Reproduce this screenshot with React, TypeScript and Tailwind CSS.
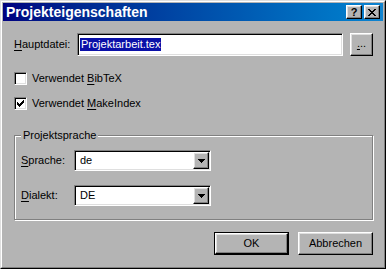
import React from "react";

// ─── Bausteine im Win9x-Stil ─────────────────────────────────────────────────

const raised =
  "border border-t-white border-l-white border-b-black border-r-black shadow-[inset_-1px_-1px_0_#808080,inset_1px_1px_0_#dfdfdf]";
const sunken =
  "border border-t-[#808080] border-l-[#808080] border-b-white border-r-white shadow-[inset_1px_1px_0_#000,inset_-1px_-1px_0_#dfdfdf]";

function U({ children }: { children: React.ReactNode }) {
  return <span className="underline underline-offset-[2px]">{children}</span>;
}

function CheckMark() {
  // 7x7 Pixel-Haken
  const px: [number, number][] = [
    [6, 0], [5, 1], [6, 1], [0, 2], [4, 2], [5, 2], [6, 2],
    [0, 3], [1, 3], [3, 3], [4, 3], [5, 3],
    [0, 4], [1, 4], [2, 4], [3, 4], [4, 4],
    [1, 5], [2, 5], [3, 5], [2, 6],
  ];
  return (
    <svg width="7" height="7" viewBox="0 0 7 7" shapeRendering="crispEdges">
      {px.map(([x, y]) => (
        <rect key={`${x}-${y}`} x={x} y={y} width="1" height="1" fill="#000" />
      ))}
    </svg>
  );
}

function Checkbox({ checked, children }: { checked?: boolean; children: React.ReactNode }) {
  return (
    <div className="flex items-center gap-[5px] h-[13px]">
      <div className={`w-[13px] h-[13px] bg-white flex items-center justify-center ${sunken}`}>
        {checked && <CheckMark />}
      </div>
      <span>{children}</span>
    </div>
  );
}

function Arrow() {
  return (
    <svg width="7" height="4" viewBox="0 0 7 4" shapeRendering="crispEdges">
      <path d="M0 0h7v1H0zM1 1h5v1H1zM2 2h3v1H2zM3 3h1v1H3z" fill="#000" />
    </svg>
  );
}

function Combo({ value }: { value: string }) {
  return (
    <div className={`w-[137px] h-[21px] bg-white flex items-center p-[2px] ${sunken}`}>
      <span className="flex-1 pl-[3px] leading-none">{value}</span>
      <div className={`w-[16px] h-[17px] -mr-px bg-[#b4b4b4] flex items-center justify-center ${raised}`}>
        <Arrow />
      </div>
    </div>
  );
}

function CloseGlyph() {
  return (
    <svg width="8" height="7" viewBox="0 0 8 7" shapeRendering="crispEdges">
      <path
        d="M0 0h2v1H0zM6 0h2v1H6zM1 1h2v1H1zM5 1h2v1H5zM2 2h4v1H2zM3 3h2v1H3zM2 4h4v1H2zM1 5h2v1H1zM5 5h2v1H5zM0 6h2v1H0zM6 6h2v1H6z"
        fill="#000"
      />
    </svg>
  );
}

// ─── Dialog ──────────────────────────────────────────────────────────────────

export default function App() {
  return (
    <div
      className="w-[386px] h-[269px] bg-[#b4b4b4] text-black text-[11px] border border-t-[#dfdfdf] border-l-[#dfdfdf] border-b-black border-r-black"
      style={{ fontFamily: '"Liberation Sans", Arial, sans-serif' }}
    >
      <div className="w-full h-full border border-t-white border-l-white border-b-[#808080] border-r-[#808080] p-px flex flex-col">
        {/* Titelleiste */}
        <div className="h-[18px] flex items-center bg-linear-to-r from-[#000080] to-[#1084d0] pl-[3px] pr-[3px]">
          <span className="flex-1 text-white font-bold text-[14px] leading-none">Projekteigenschaften</span>
          <div className={`w-[16px] h-[14px] bg-[#b4b4b4] flex items-center justify-center ${raised}`}>
            <span className="font-bold text-[11px] leading-none">?</span>
          </div>
          <div className={`w-[16px] h-[14px] ml-[2px] bg-[#b4b4b4] flex items-center justify-center ${raised}`}>
            <CloseGlyph />
          </div>
        </div>

        {/* Inhalt */}
        <div className="flex-1 flex flex-col pt-[12px] pl-[11px]">
          <div className="flex items-center h-[23px]">
            <span className="w-[63px]">
              <U>H</U>auptdatei:
            </span>
            <div className={`w-[266px] h-[23px] bg-white flex items-center pl-[2px] ${sunken}`}>
              <span className="bg-[#0a10a8] text-white leading-[13px] px-px">Projektarbeit.tex</span>
            </div>
            <div className={`w-[23px] h-[23px] ml-[7px] flex items-center justify-center ${raised}`}>
              <span className="leading-none pb-[2px]">
                <U>.</U>..
              </span>
            </div>
          </div>

          <div className="mt-[16px]">
            <Checkbox>
              Verwendet <U>B</U>ibTeX
            </Checkbox>
          </div>
          <div className="mt-[12px]">
            <Checkbox checked>
              Verwendet <U>M</U>akeIndex
            </Checkbox>
          </div>

          {/* Gruppe */}
          <div className="relative mt-[25px] w-[359px] h-[85px] border border-[#808080] shadow-[1px_1px_0_#fff,inset_1px_1px_0_#fff] pt-[14px] pl-[6px] flex flex-col">
            <span className="absolute left-[6px] top-[-7px] px-[2px] bg-[#b4b4b4] leading-[13px]">Projektsprache</span>
            <div className="flex items-center">
              <span className="w-[53px]">
                <U>S</U>prache:
              </span>
              <Combo value="de" />
            </div>
            <div className="flex items-center mt-[14px]">
              <span className="w-[53px]">
                <U>D</U>ialekt:
              </span>
              <Combo value="DE" />
            </div>
          </div>

          {/* Schaltflächen */}
          <div className="flex w-[359px] justify-end gap-[9px] mt-[12px]">
            <div className="w-[75px] h-[23px] border border-black">
              <div className={`w-full h-full flex items-center justify-center ${raised}`}>OK</div>
            </div>
            <div className={`w-[75px] h-[23px] flex items-center justify-center ${raised}`}>Abbrechen</div>
          </div>
        </div>
      </div>
    </div>
  );
}
